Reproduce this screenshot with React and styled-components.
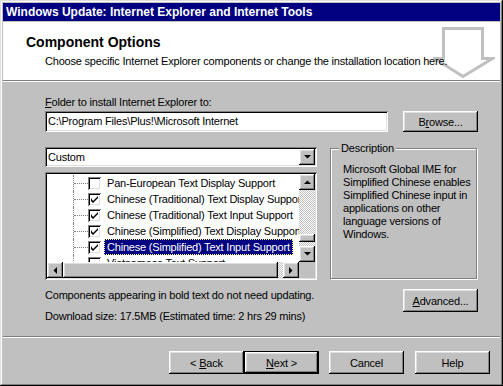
import React from 'react';
import styled, { createGlobalStyle, css } from 'styled-components';

const GlobalStyle = createGlobalStyle`
  html, body {
    margin: 0;
    padding: 0;
    background: #c0c0c0;
  }
  body {
    font-family: "Liberation Sans", Arial, sans-serif;
    font-size: 11px;
    letter-spacing: -0.2px;
    color: #000;
  }
  * { box-sizing: border-box; }
`;

const raised = css`
  background: #c0c0c0;
  box-shadow: inset -1px -1px #000, inset 1px 1px #fff, inset -2px -2px #808080, inset 2px 2px #dfdfdf;
`;

const sunken = css`
  background: #fff;
  box-shadow: inset 1px 1px #808080, inset -1px -1px #fff, inset 2px 2px #000, inset -2px -2px #dfdfdf;
`;

const checker = css`
  background: repeating-conic-gradient(#c0c0c0 0 25%, #fff 0 50%) 0 0 / 2px 2px;
`;

const Window = styled.div`
  width: 503px;
  height: 386px;
  display: flex;
  flex-direction: column;
  padding: 3px;
  background: #c0c0c0;
  box-shadow: inset -1px -1px #000, inset 1px 1px #dfdfdf, inset -2px -2px #808080, inset 2px 2px #fff;
`;

const TitleBar = styled.div`
  height: 18px;
  line-height: 18px;
  padding-left: 3px;
  background: #000080;
  color: #fff;
  font-weight: bold;
  font-size: 12px;
  letter-spacing: 0;
  white-space: nowrap;
`;

const Header = styled.div`
  position: relative;
  height: 58px;
  margin-top: 1px;
  padding: 12px 0 0 23px;
  background: #fff;
`;

const HeaderTitle = styled.div`
  font-size: 14px;
  font-weight: bold;
  line-height: 16px;
  letter-spacing: 0;
`;

const HeaderText = styled.div`
  position: relative;
  z-index: 1;
  margin: 5px 0 0 19px;
  line-height: 13px;
  white-space: nowrap;
`;

const HeaderArrow = styled.svg`
  position: absolute;
  top: 5px;
  right: 5px;
`;

const Rule = styled.div`
  height: 2px;
  border-top: 1px solid #808080;
  border-bottom: 1px solid #fff;
`;

const Body = styled.div`
  flex: 1;
  padding: 14px 22px 0 42px;
`;

const Label = styled.div`
  line-height: 13px;
`;

const FolderRow = styled.div`
  display: flex;
  gap: 15px;
  margin-top: 2px;
`;

const TextField = styled.div`
  ${sunken};
  flex: 1;
  height: 21px;
  line-height: 21px;
  padding: 0 3px;
  white-space: nowrap;
`;

const Button = styled.button`
  ${raised};
  width: 75px;
  height: ${p => p.$h || 23}px;
  padding: 0;
  border: none;
  font: inherit;
  letter-spacing: inherit;
  color: #000;
  ${p => p.$default && css`
    box-shadow: inset -2px -2px #000, inset 2px 2px #fff, inset -3px -3px #808080, inset 3px 3px #dfdfdf, inset 1px 1px #000;
    outline: 1px solid #000;
    outline-offset: -1px;
  `}
`;

const MainGrid = styled.div`
  display: grid;
  grid-template-columns: 272px 148px;
  column-gap: 13px;
  margin-top: 15px;
`;

const LeftCol = styled.div`
  display: flex;
  flex-direction: column;
  gap: 5px;
`;

const Combo = styled.div`
  ${sunken};
  height: 20px;
  display: flex;
  padding: 2px;
`;

const ComboText = styled.div`
  flex: 1;
  line-height: 16px;
  padding-left: 1px;
`;

const ScrollButton = styled.div`
  ${raised};
  width: 16px;
  height: 16px;
  flex: none;
  display: flex;
  align-items: center;
  justify-content: center;
`;

const TreeBox = styled.div`
  ${sunken};
  height: 108px;
  padding: 2px;
  display: grid;
  grid-template-columns: 1fr 16px;
  grid-template-rows: 1fr 16px;
`;

const TreeContent = styled.div`
  overflow: hidden;
  padding-top: 1px;
`;

const TreeRow = styled.div`
  height: 16px;
  display: flex;
  align-items: center;
  padding-left: 26px;
  white-space: nowrap;
`;

const Connector = styled.div`
  width: 15px;
  height: 16px;
  flex: none;
  display: flex;
  align-items: center;
  border-left: 1px dotted #808080;
`;

const Dash = styled.div`
  flex: 1;
  border-top: 1px dotted #808080;
`;

const CheckBox = styled.div`
  width: 13px;
  height: 13px;
  flex: none;
  ${sunken};
  display: flex;
  align-items: center;
  justify-content: center;
`;

const ItemLabel = styled.span`
  margin-left: 3px;
  padding: 0 2px;
  line-height: 14px;
  border: 1px solid transparent;
  ${p => p.$selected && css`
    background: #000080;
    color: #fff;
    border: 1px dotted #ffff80;
  `}
`;

const VScroll = styled.div`
  display: flex;
  flex-direction: column;
  background: #c0c0c0;
`;

const VTrack = styled.div`
  flex: 1;
  display: flex;
  flex-direction: column;
`;

const TrackFill = styled.div`
  ${checker};
  flex: ${p => (p.$size ? `0 0 ${p.$size}px` : 1)};
`;

const Thumb = styled.div`
  ${raised};
  flex: ${p => (p.$size ? `0 0 ${p.$size}px` : 1)};
`;

const HScroll = styled.div`
  display: flex;
  background: #c0c0c0;
`;

const Corner = styled.div`
  background: #c0c0c0;
`;

const GroupBox = styled.div`
  position: relative;
  margin: 1px 1px 1px 0;
  padding: 14px 0 0 12px;
  border: 1px solid #808080;
  box-shadow: inset 1px 1px #fff, 1px 1px #fff;
  line-height: 13px;
  white-space: nowrap;
`;

const GroupLabel = styled.span`
  position: absolute;
  top: -7px;
  left: 8px;
  padding: 0 2px;
  background: #c0c0c0;
  line-height: 13px;
`;

const InfoRow = styled.div`
  display: flex;
  justify-content: space-between;
  align-items: flex-start;
  margin-top: 9px;
`;

const InfoLine = styled.div`
  line-height: 13px;
  margin-top: ${p => p.$gap || 0}px;
`;

const Footer = styled.div`
  height: 45px;
  display: flex;
  justify-content: flex-end;
  align-items: flex-start;
  padding: 13px 10px 0 0;
`;

const ButtonPair = styled.div`
  display: flex;
  margin-right: 10px;
`;

const Spaced = styled.div`
  margin-right: ${p => p.$gap}px;
`;

const Tri = ({ dir }) => {
  const pts = {
    up: '0,4 7,4 3.5,0.5',
    down: '0,0 7,0 3.5,3.5',
    left: '4,0 4,7 0.5,3.5',
    right: '0,0 0,7 3.5,3.5',
  }[dir];
  const vertical = dir === 'up' || dir === 'down';
  return (
    <svg width={vertical ? 7 : 4} height={vertical ? 4 : 7} viewBox={vertical ? '0 0 7 4' : '0 0 4 7'}>
      <polygon points={pts} fill="#000" />
    </svg>
  );
};

const Check = () => (
  <svg width="7" height="7" viewBox="0 0 7 7">
    <path d="M0 2 L0 5 L2 7 L7 2 L7 0 L2 5 Z" fill="#000" />
  </svg>
);

const items = [
  { label: 'Pan-European Text Display Support', checked: false },
  { label: 'Chinese (Traditional) Text Display Support', checked: true },
  { label: 'Chinese (Traditional) Text Input Support', checked: true },
  { label: 'Chinese (Simplified) Text Display Support', checked: true },
  { label: 'Chinese (Simplified) Text Input Support', checked: true, selected: true },
  { label: 'Vietnamese Text Support', checked: false },
];

const description = [
  'Microsoft Global IME for',
  'Simplified Chinese enables',
  'Simplified Chinese input in',
  'applications on other',
  'language versions of',
  'Windows.',
];

export default function App() {
  return (
    <>
      <GlobalStyle />
      <Window>
        <TitleBar>Windows Update: Internet Explorer and Internet Tools</TitleBar>
        <Header>
          <HeaderTitle>Component Options</HeaderTitle>
          <HeaderText>
            Choose specific Internet Explorer components or change the installation location here.
          </HeaderText>
          <HeaderArrow width="62" height="52" viewBox="0 0 62 52">
            <polygon
              points="10.5,1.5 49.5,1.5 49.5,31.5 59.5,31.5 30,49.5 1.5,31.5 10.5,31.5"
              fill="#fff"
              stroke="#c0c0c0"
              strokeWidth="3"
            />
          </HeaderArrow>
        </Header>
        <Rule />
        <Body>
          <Label>
            <u>F</u>older to install Internet Explorer to:
          </Label>
          <FolderRow>
            <TextField>C:\Program Files\Plus!\Microsoft Internet</TextField>
            <Button $h={21}>
              B<u>r</u>owse...
            </Button>
          </FolderRow>
          <MainGrid>
            <LeftCol>
              <Combo>
                <ComboText>Custom</ComboText>
                <ScrollButton>
                  <Tri dir="down" />
                </ScrollButton>
              </Combo>
              <TreeBox>
                <TreeContent>
                  {items.map(it => (
                    <TreeRow key={it.label}>
                      <Connector>
                        <Dash />
                      </Connector>
                      <CheckBox>{it.checked && <Check />}</CheckBox>
                      <ItemLabel $selected={it.selected}>{it.label}</ItemLabel>
                    </TreeRow>
                  ))}
                </TreeContent>
                <VScroll>
                  <ScrollButton>
                    <Tri dir="up" />
                  </ScrollButton>
                  <VTrack>
                    <TrackFill />
                    <Thumb $size={8} />
                    <TrackFill $size={4} />
                  </VTrack>
                  <ScrollButton>
                    <Tri dir="down" />
                  </ScrollButton>
                </VScroll>
                <HScroll>
                  <ScrollButton>
                    <Tri dir="left" />
                  </ScrollButton>
                  <Thumb />
                  <TrackFill $size={5} />
                  <ScrollButton>
                    <Tri dir="right" />
                  </ScrollButton>
                </HScroll>
                <Corner />
              </TreeBox>
            </LeftCol>
            <GroupBox>
              <GroupLabel>Description</GroupLabel>
              {description.map(line => (
                <div key={line}>{line}</div>
              ))}
            </GroupBox>
          </MainGrid>
          <InfoRow>
            <div>
              <InfoLine>Components appearing in bold text do not need updating.</InfoLine>
              <InfoLine $gap={8}>Download size: 17.5MB (Estimated time: 2 hrs 29 mins)</InfoLine>
            </div>
            <Button>
              <u>A</u>dvanced...
            </Button>
          </InfoRow>
        </Body>
        <Rule />
        <Footer>
          <ButtonPair>
            <Button>
              &lt; <u>B</u>ack
            </Button>
            <Button $default>
              <u>N</u>ext &gt;
            </Button>
          </ButtonPair>
          <Spaced $gap={11}>
            <Button>Cancel</Button>
          </Spaced>
          <Button>Help</Button>
        </Footer>
      </Window>
    </>
  );
}
